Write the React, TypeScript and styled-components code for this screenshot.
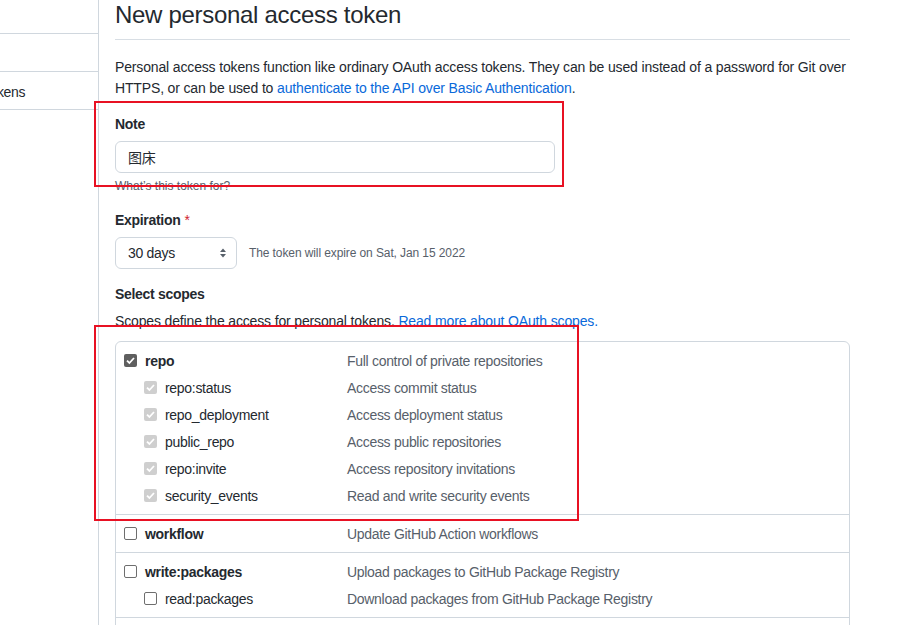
import React from "react";
import styled, { createGlobalStyle } from "styled-components";

const GlobalStyle = createGlobalStyle`
  html, body {
    margin: 0;
    padding: 0;
    background: #ffffff;
    overflow: hidden;
  }
  body {
    font-family: "Liberation Sans", Arial, "Noto Sans CJK SC", sans-serif;
    color: #24292f;
    font-size: 14px;
    letter-spacing: -0.3px;
  }
`;

const Page = styled.div`
  position: relative;
  display: flex;
  width: 903px;
  height: 625px;
  overflow: hidden;
`;

const Sidebar = styled.nav`
  width: 98px;
  flex-shrink: 0;
  border-right: 1px solid #d0d7de;
  overflow: hidden;
`;

const MenuList = styled.div`
  margin-top: -4px;
  margin-left: -132px;
`;

const MenuItem = styled.div`
  box-sizing: border-box;
  height: 38px;
  border-bottom: 1px solid #d0d7de;
  padding: 2px 16px 0;
  display: flex;
  align-items: center;
  white-space: nowrap;
  font-size: 14px;
  color: #24292f;
`;

const Main = styled.main`
  margin-left: 16px;
  width: 735px;
  display: flex;
  flex-direction: column;
`;

const Heading = styled.h1`
  margin: 0;
  font-size: 24px;
  font-weight: 400;
  line-height: 30px;
  padding-bottom: 9px;
  border-bottom: 1px solid #d8dee4;
  white-space: nowrap;
`;

const Intro = styled.p`
  margin: 17px 0 0;
  line-height: 21px;
  font-size: 14px;
  letter-spacing: -0.15px;
`;

const Link = styled.a`
  color: #0969da;
  text-decoration: none;
`;

const FormGroup = styled.div<{ $top: number }>`
  margin-top: ${(p) => p.$top}px;
  display: flex;
  flex-direction: column;
  align-items: flex-start;
`;

const Label = styled.label`
  font-weight: 700;
  font-size: 14px;
  line-height: 21px;
  margin-bottom: 6px;
`;

const Required = styled.span`
  color: #cf222e;
  margin-left: 4px;
  font-weight: 400;
`;

const TextInput = styled.div`
  box-sizing: border-box;
  width: 440px;
  height: 32px;
  border: 1px solid #d0d7de;
  border-radius: 6px;
  padding: 0 12px;
  display: flex;
  align-items: center;
  font-size: 14px;
  background: #ffffff;
`;

const Hint = styled.div`
  margin-top: 4px;
  font-size: 12px;
  line-height: 18px;
  color: #57606a;
  letter-spacing: 0;
`;

const SelectRow = styled.div`
  display: flex;
  align-items: center;
  gap: 12px;
`;

const Select = styled.div`
  box-sizing: border-box;
  width: 122px;
  height: 32px;
  border: 1px solid #d0d7de;
  border-radius: 6px;
  padding: 0 9px 0 12px;
  display: flex;
  align-items: center;
  justify-content: space-between;
  font-size: 14px;
`;

const SelectNote = styled.span`
  font-size: 12px;
  color: #57606a;
  letter-spacing: -0.1px;
`;

const SubText = styled.p`
  margin: 0;
  line-height: 21px;
  font-size: 14px;
  letter-spacing: -0.15px;
`;

const ScopeBox = styled.div`
  margin-top: 9px;
  border: 1px solid #d0d7de;
  border-radius: 6px;
  display: flex;
  flex-direction: column;
`;

const Group = styled.div`
  padding: 5px 0 5px;
  border-bottom: 1px solid #d0d7de;
`;

const Row = styled.div`
  display: grid;
  grid-template-columns: 223px 1fr;
  align-items: center;
  height: 27px;
  padding-left: 8px;
`;

const NameCell = styled.div<{ $sub: boolean }>`
  display: flex;
  align-items: center;
  gap: 8px;
  padding-left: ${(p) => (p.$sub ? 20 : 0)}px;
  font-size: 14px;
  font-weight: ${(p) => (p.$sub ? 400 : 700)};
  white-space: nowrap;
`;

const Desc = styled.div`
  font-size: 14px;
  color: #57606a;
  white-space: nowrap;
`;

type BoxState = "checked" | "disabled" | "empty";

const Box = styled.span<{ $state: BoxState }>`
  box-sizing: border-box;
  width: 13px;
  height: 13px;
  border-radius: 2px;
  flex-shrink: 0;
  display: inline-flex;
  align-items: center;
  justify-content: center;
  background: ${(p) =>
    p.$state === "checked" ? "#5f5f5f" : p.$state === "disabled" ? "#cfcfcf" : "#ffffff"};
  border: ${(p) => (p.$state === "empty" ? "1px solid #6e6e6e" : "none")};
`;

const Annotation = styled.div<{ $l: number; $t: number; $w: number; $h: number }>`
  position: absolute;
  left: ${(p) => p.$l}px;
  top: ${(p) => p.$t}px;
  width: ${(p) => p.$w}px;
  height: ${(p) => p.$h}px;
  box-sizing: border-box;
  border: 2px solid #e81123;
  pointer-events: none;
`;

const Check: React.FC<{ state: BoxState }> = ({ state }) => (
  <Box $state={state}>
    {state !== "empty" && (
      <svg width="11" height="11" viewBox="0 0 11 11">
        <path d="M2 5.6 L4.4 8 L9 3" fill="none" stroke="#ffffff" strokeWidth="1.8" />
      </svg>
    )}
  </Box>
);

type Scope = { name: string; desc: string; sub?: boolean; state: BoxState };

const groups: Scope[][] = [
  [
    { name: "repo", desc: "Full control of private repositories", state: "checked" },
    { name: "repo:status", desc: "Access commit status", sub: true, state: "disabled" },
    { name: "repo_deployment", desc: "Access deployment status", sub: true, state: "disabled" },
    { name: "public_repo", desc: "Access public repositories", sub: true, state: "disabled" },
    { name: "repo:invite", desc: "Access repository invitations", sub: true, state: "disabled" },
    { name: "security_events", desc: "Read and write security events", sub: true, state: "disabled" },
  ],
  [{ name: "workflow", desc: "Update GitHub Action workflows", state: "empty" }],
  [
    { name: "write:packages", desc: "Upload packages to GitHub Package Registry", state: "empty" },
    { name: "read:packages", desc: "Download packages from GitHub Package Registry", sub: true, state: "empty" },
  ],
  [{ name: "delete:packages", desc: "Delete packages from GitHub Package Registry", state: "empty" }],
];

export default function App() {
  return (
    <>
      <GlobalStyle />
      <Page>
        <Sidebar>
          <MenuList>
            <MenuItem>OAuth Apps</MenuItem>
            <MenuItem>GitHub Apps</MenuItem>
            <MenuItem>Personal access tokens</MenuItem>
          </MenuList>
        </Sidebar>
        <Main>
          <Heading>New personal access token</Heading>
          <Intro>
            Personal access tokens function like ordinary OAuth access tokens. They can be used instead of a
            password for Git over HTTPS, or can be used to{" "}
            <Link>authenticate to the API over Basic Authentication</Link>.
          </Intro>
          <FormGroup $top={15}>
            <Label>Note</Label>
            <TextInput>图床</TextInput>
            <Hint>What’s this token for?</Hint>
          </FormGroup>
          <FormGroup $top={15}>
            <Label>
              Expiration<Required>*</Required>
            </Label>
            <SelectRow>
              <Select>
                <span>30 days</span>
                <svg width="8" height="12" viewBox="0 0 8 12">
                  <path d="M4 1.5 L7 5 L1 5 Z" fill="#57606a" />
                  <path d="M4 10.5 L7 7 L1 7 Z" fill="#57606a" />
                </svg>
              </Select>
              <SelectNote>The token will expire on Sat, Jan 15 2022</SelectNote>
            </SelectRow>
          </FormGroup>
          <FormGroup $top={15}>
            <Label>Select scopes</Label>
          </FormGroup>
          <SubText>
            Scopes define the access for personal tokens. <Link>Read more about OAuth scopes.</Link>
          </SubText>
          <ScopeBox>
            {groups.map((g, i) => (
              <Group key={i}>
                {g.map((s) => (
                  <Row key={s.name}>
                    <NameCell $sub={!!s.sub}>
                      <Check state={s.state} />
                      {s.name}
                    </NameCell>
                    <Desc>{s.desc}</Desc>
                  </Row>
                ))}
              </Group>
            ))}
          </ScopeBox>
        </Main>
        <Annotation $l={94} $t={101} $w={470} $h={86} />
        <Annotation $l={94} $t={325} $w={485} $h={196} />
      </Page>
    </>
  );
}
